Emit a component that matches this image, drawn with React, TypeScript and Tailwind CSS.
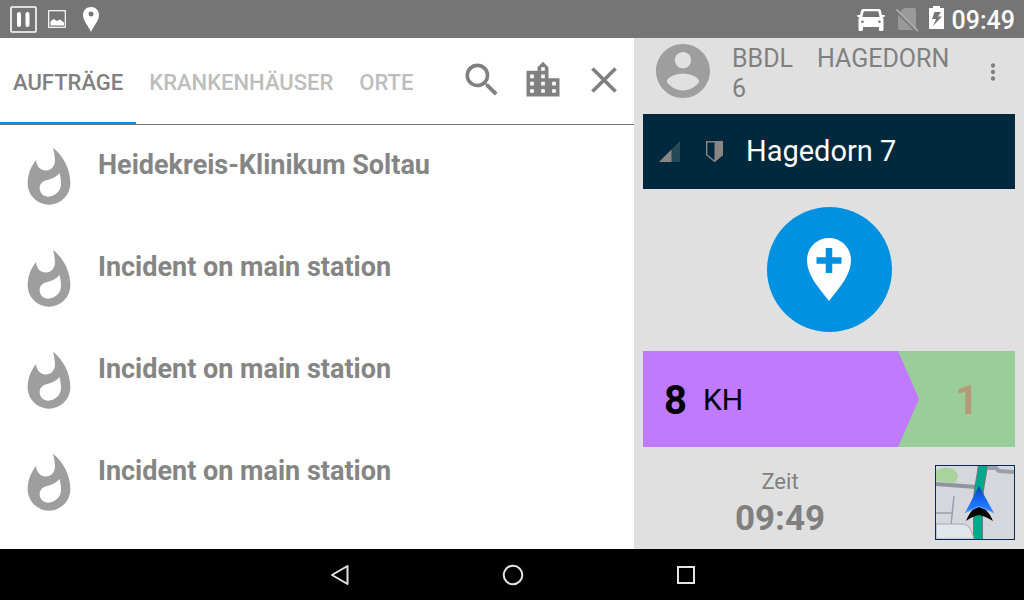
import { useState } from "react";
import { MdClose, MdLocationCity, MdMoreVert, MdSearch, MdWhatshot } from "react-icons/md";

const tabs = ["AUFTRÄGE", "KRANKENHÄUSER", "ORTE"];

const jobs = [
  "Heidekreis-Klinikum Soltau",
  "Incident on main station",
  "Incident on main station",
  "Incident on main station",
];

const StatusBar = () => (
  <header className="flex h-[38px] items-center justify-between bg-[#757575] pl-[10px] pr-[9px] text-white">
    <div className="flex items-center">
      <svg width="27" height="27" viewBox="0 0 27 27" fill="none" stroke="currentColor">
        <rect x="1" y="1" width="25" height="25" rx="1" strokeWidth="1.6" />
        <path d="M9 8v11M17.5 8v11" strokeWidth="4" strokeLinecap="round" />
      </svg>
      <svg className="ml-[11px]" width="18" height="18" viewBox="0 0 18 18">
        <rect x="0.7" y="0.7" width="16.6" height="16.6" fill="none" stroke="currentColor" strokeWidth="1.2" />
        <path d="M2.5 15.5v-4l3-2.5L9 11l3-1.5 4 3v3z" fill="currentColor" />
      </svg>
      <svg className="ml-[17px]" width="16" height="25" viewBox="0 0 16 25">
        <path
          fill="currentColor"
          fillRule="evenodd"
          d="M8 0C3.5 0 0 3.5 0 8c0 6 5.5 11 8 17 2.5-6 8-11 8-17 0-4.5-3.5-8-8-8zm0 4.5a2.5 2.5 0 1 1 0 5 2.5 2.5 0 0 1 0-5z"
        />
      </svg>
    </div>
    <div className="flex items-center">
      <svg className="mt-[2px] -mr-px ml-px" width="28" height="22" viewBox="0 0 28 22">
        <path
          fill="currentColor"
          fillRule="evenodd"
          d="M6.5 0h15c1.3 0 2 .5 2.4 1.6L25 6h2.5c.5 0 .5 2-.5 2h-1.3l.8 2v10.5c0 .9-.5 1.5-1.3 1.5h-2c-.8 0-1.2-.6-1.2-1.5V18H6v2.5c0 .9-.4 1.5-1.2 1.5h-2c-.8 0-1.3-.6-1.3-1.5V10l.8-2H1C0 8 0 6 .5 6H3l1.1-4.4C4.5.5 5.2 0 6.5 0zM6.8 2.2L5.3 8h17.4l-1.5-5.8zM5.5 11.5a1.3 1.3 0 1 0 0 2.6 1.3 1.3 0 0 0 0-2.6zm17 0a1.3 1.3 0 1 0 0 2.6 1.3 1.3 0 0 0 0-2.6z"
        />
      </svg>
      <svg className="mt-px ml-[12px]" width="23" height="24" viewBox="0 0 23 24">
        <path d="M8 0h10c1.2 0 2 .8 2 2v20H4c-1 0-2-1-2-2V6z" fill="#9a9a9a" />
        <path d="M0 3.5l20 20" stroke="#757575" strokeWidth="1.6" />
        <path d="M.5 1.5L22 23" stroke="#a8a8a8" strokeWidth="1.8" />
      </svg>
      <svg className="mb-[3px] ml-[10px]" width="15" height="23" viewBox="0 0 15 23">
        <path
          fill="currentColor"
          fillRule="evenodd"
          d="M4 0h7v2h4v21H0V2h4zM5.5 6L3 13h4l-3 7 9-9.5H9L12 6z"
        />
      </svg>
      <span className="ml-[8px] pt-[3px] text-[25px] leading-[35px] font-medium">09:49</span>
    </div>
  </header>
);

const Avatar = () => (
  <svg className="h-[54px] w-[54px] shrink-0" viewBox="2 2 20 20" fill="#9e9e9e">
    <path d="M12 2C6.48 2 2 6.48 2 12s4.48 10 10 10 10-4.48 10-10S17.52 2 12 2zm0 3c1.66 0 3 1.34 3 3s-1.34 3-3 3-3-1.34-3-3 1.34-3 3-3zm0 14.2c-2.5 0-4.71-1.28-6-3.22.03-1.99 4-3.08 6-3.08 1.99 0 5.97 1.09 6 3.08-1.29 1.94-3.5 3.22-6 3.22z" />
  </svg>
);

const MiniMap = () => (
  <svg className="block" width="78" height="73" viewBox="0 0 78 73" fill="none">
    <defs>
      <linearGradient id="arrow" x1="0" y1="0" x2="0" y2="1">
        <stop offset="0" stopColor="#0a3fa8" />
        <stop offset="0.5" stopColor="#1468f5" />
        <stop offset="1" stopColor="#2f86ff" />
      </linearGradient>
    </defs>
    <rect width="78" height="73" fill="#d5d7dc" />
    <path d="M0 5C6 0 18 1 21 7c2 4 0 8-3 10L0 15z" fill="#a9d39b" />
    <path d="M0 18l40 3" stroke="#8f949e" strokeWidth="4" />
    <path d="M50 2h10l3 3 15 1" stroke="#9a9fa9" strokeWidth="4" />
    <path d="M18 30l-3 29M0 47h16" stroke="#9a9fad" strokeWidth="1.5" />
    <path d="M47-2c-1 12-4 20-5 36v41" stroke="#6b7a80" strokeWidth="10" />
    <path d="M47-2c-1 12-4 20-5 36v41" stroke="#00a88c" strokeWidth="8" />
    <path d="M0 58h26c8 0 10 8 12 15H0z" fill="#e0e6ea" stroke="#a4a9b0" />
    <path d="M43 37c5 5 11 10 14 18-5-3-9-5-14-6-5 1-9 3-13 6 3-8 8-13 13-18z" fill="#000" />
    <path d="M43 20l15 27-15-6-14 6z" fill="url(#arrow)" />
    <path d="M29 46.5l14-6 15 6" stroke="#63a9ff" />
  </svg>
);

const Orders = () => {
  const [active, setActive] = useState(0);

  return (
    <main className="flex min-w-0 flex-col bg-white text-[#808080]">
      <div className="flex h-[87px] items-stretch justify-between border-b border-[#757575]">
        <div role="tablist" className="flex">
          {tabs.map((tab, index) => (
            <button
              key={tab}
              role="tab"
              aria-selected={active === index}
              onClick={() => setActive(index)}
              className={`border-b-2 px-[13px] pt-[5px] text-[22px] font-medium ${
                active === index ? "border-[#0091e1]" : "border-transparent text-[#bdbdbd]"
              }`}
            >
              {tab}
            </button>
          ))}
        </div>
        <div className="flex items-center gap-[17px] pr-[8px] pb-[2px]">
          <button aria-label="Suchen">
            <MdSearch size={44} />
          </button>
          <button aria-label="Stadt">
            <MdLocationCity size={44} />
          </button>
          <button aria-label="Schließen">
            <MdClose size={44} />
          </button>
        </div>
      </div>
      <ul>
        {jobs.map((job, index) => (
          <li key={index} className="flex h-[102px] items-start gap-[17px] px-[17px] pt-[21px]">
            <MdWhatshot size={64} className="shrink-0 text-[#9e9e9e]" />
            <span className="text-[27px] leading-[38px] font-bold text-[#858585]">{job}</span>
          </li>
        ))}
      </ul>
    </main>
  );
};

const SidePanel = () => (
  <aside className="flex min-w-0 flex-col bg-[#e0e0e0] px-[9px] text-[#808080]">
    <div className="flex h-[76px] items-start pt-[6px] pl-[13px]">
      <Avatar />
      <span className="ml-[22px] w-[85px] pr-[20px] text-[25px] leading-[30px]">BBDL 6</span>
      <span className="text-[25px] leading-[30px]">HAGEDORN</span>
      <button aria-label="Menü" className="mt-[15px] mr-[9px] ml-auto">
        <MdMoreVert size={26} />
      </button>
    </div>

    <div className="flex h-[75px] items-center bg-[#00293d] pl-[16px]">
      <svg width="21" height="21" viewBox="0 0 21 21">
        <path d="M21 0v21H0z" fill="#264958" />
        <path d="M12.5 8.5V21H0z" fill="#8a8686" />
      </svg>
      <svg className="ml-[26px]" width="17" height="21" viewBox="0 0 17 21">
        <path d="M.7.7h15.6v13L8.5 20.3.7 13.7z" fill="none" stroke="#8a8686" strokeWidth="1.4" />
        <path d="M8.5 0H17v14l-8.5 7z" fill="#8a8686" />
      </svg>
      <span className="ml-[23px] pb-[2px] text-[29px] leading-[40px] text-white">Hagedorn 7</span>
    </div>

    <button
      aria-label="Neuer Einsatzort"
      className="mt-[18px] flex h-[125px] w-[125px] items-center justify-center self-center rounded-full bg-[#0091e1]"
    >
      <svg width="44" height="63" viewBox="0 0 44 63">
        <path d="M22 0C10 0 0 9.5 0 22c0 15 11 27 22 41 11-14 22-26 22-41C44 9.5 34 0 22 0z" fill="#fff" />
        <path d="M22 10v25M9.500 22.500h25" stroke="#0091e1" strokeWidth="6.5" />
      </svg>
    </button>

    <div className="mt-[19px] flex h-[96px] bg-[#9bcd9a]">
      <button className="flex flex-1 items-center bg-[#bf7aff] pl-[21px] text-black">
        <span className="pt-[4px] text-[40px] font-bold">8</span>
        <span className="ml-[16px] text-[30px]">KH</span>
      </button>
      <svg width="21" height="96" viewBox="0 0 21 96">
        <path d="M0 0l21 48L0 96z" fill="#bf7aff" />
      </svg>
      <button className="w-[96px] pt-[4px] text-[40px] font-bold text-[#b79a75]">1</button>
    </div>

    <div className="mt-[18px] flex items-start">
      <div className="mr-[18px] flex flex-1 flex-col items-center pt-px">
        <span className="text-[22px] leading-[32px]">Zeit</span>
        <span className="text-[35px] leading-[42px] font-bold">09:49</span>
      </div>
      <button aria-label="Karte" className="border border-[#0b2a5c]">
        <MiniMap />
      </button>
    </div>
  </aside>
);

const NavBar = () => (
  <nav className="flex h-[51px] items-center justify-center gap-[149px] bg-black pl-[2px] text-[#e4e4e4]">
    <button aria-label="Zurück">
      <svg width="24" height="24" viewBox="0 0 24 24" fill="none" stroke="currentColor" strokeWidth="2">
        <path d="M19.5 3v18L4 12z" strokeLinejoin="round" />
      </svg>
    </button>
    <button aria-label="Startseite">
      <svg width="24" height="24" viewBox="0 0 24 24" fill="none" stroke="currentColor" strokeWidth="2">
        <circle cx="12" cy="12" r="9.3" />
      </svg>
    </button>
    <button aria-label="Übersicht">
      <svg width="24" height="24" viewBox="0 0 24 24" fill="none" stroke="currentColor" strokeWidth="2">
        <rect x="4" y="4" width="16" height="16" />
      </svg>
    </button>
  </nav>
);

const App = () => {
  return (
    <div className="flex min-h-screen flex-col font-['Roboto',sans-serif]">
      <StatusBar />
      <div className="grid flex-1 grid-cols-[634fr_390fr]">
        <Orders />
        <SidePanel />
      </div>
      <NavBar />
    </div>
  );
};

export default App;
